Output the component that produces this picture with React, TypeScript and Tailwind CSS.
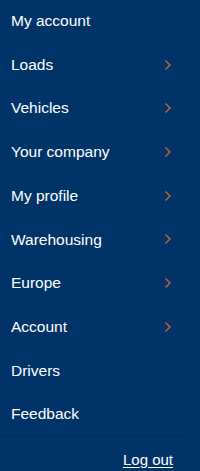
import React from 'react';

const items: { label: string; sub: boolean }[] = [
  { label: 'My account', sub: false },
  { label: 'Loads', sub: true },
  { label: 'Vehicles', sub: true },
  { label: 'Your company', sub: true },
  { label: 'My profile', sub: true },
  { label: 'Warehousing', sub: true },
  { label: 'Europe', sub: true },
  { label: 'Account', sub: true },
  { label: 'Drivers', sub: false },
  { label: 'Feedback', sub: false },
];

function Chevron() {
  return (
    <svg width="8" height="12" viewBox="0 0 8 12" fill="none">
      <path d="M1.5 1.5 L6 6 L1.5 10.5" stroke="#c8643c" strokeWidth="1.4" />
    </svg>
  );
}

export default function App() {
  return (
    <div className="w-[200px] h-[471px] overflow-hidden bg-[#003468] font-['Liberation_Sans',Arial,sans-serif] text-white">
      <div className="w-[186px] h-full border-r border-[#0c2c58]">
        <ul className="-mt-[1px]">
          {items.map((it) => (
            <li key={it.label} className="h-[43.7px] flex items-center justify-between pl-[11px] pr-[13px]">
              <span className="text-[15.5px] leading-none">{it.label}</span>
              {it.sub && <Chevron />}
            </li>
          ))}
        </ul>
        <div className="border-t border-[#0f2748] flex justify-end pr-[12px] pt-[15px]">
          <a className="text-[15px] leading-none underline underline-offset-2">Log out</a>
        </div>
      </div>
    </div>
  );
}
